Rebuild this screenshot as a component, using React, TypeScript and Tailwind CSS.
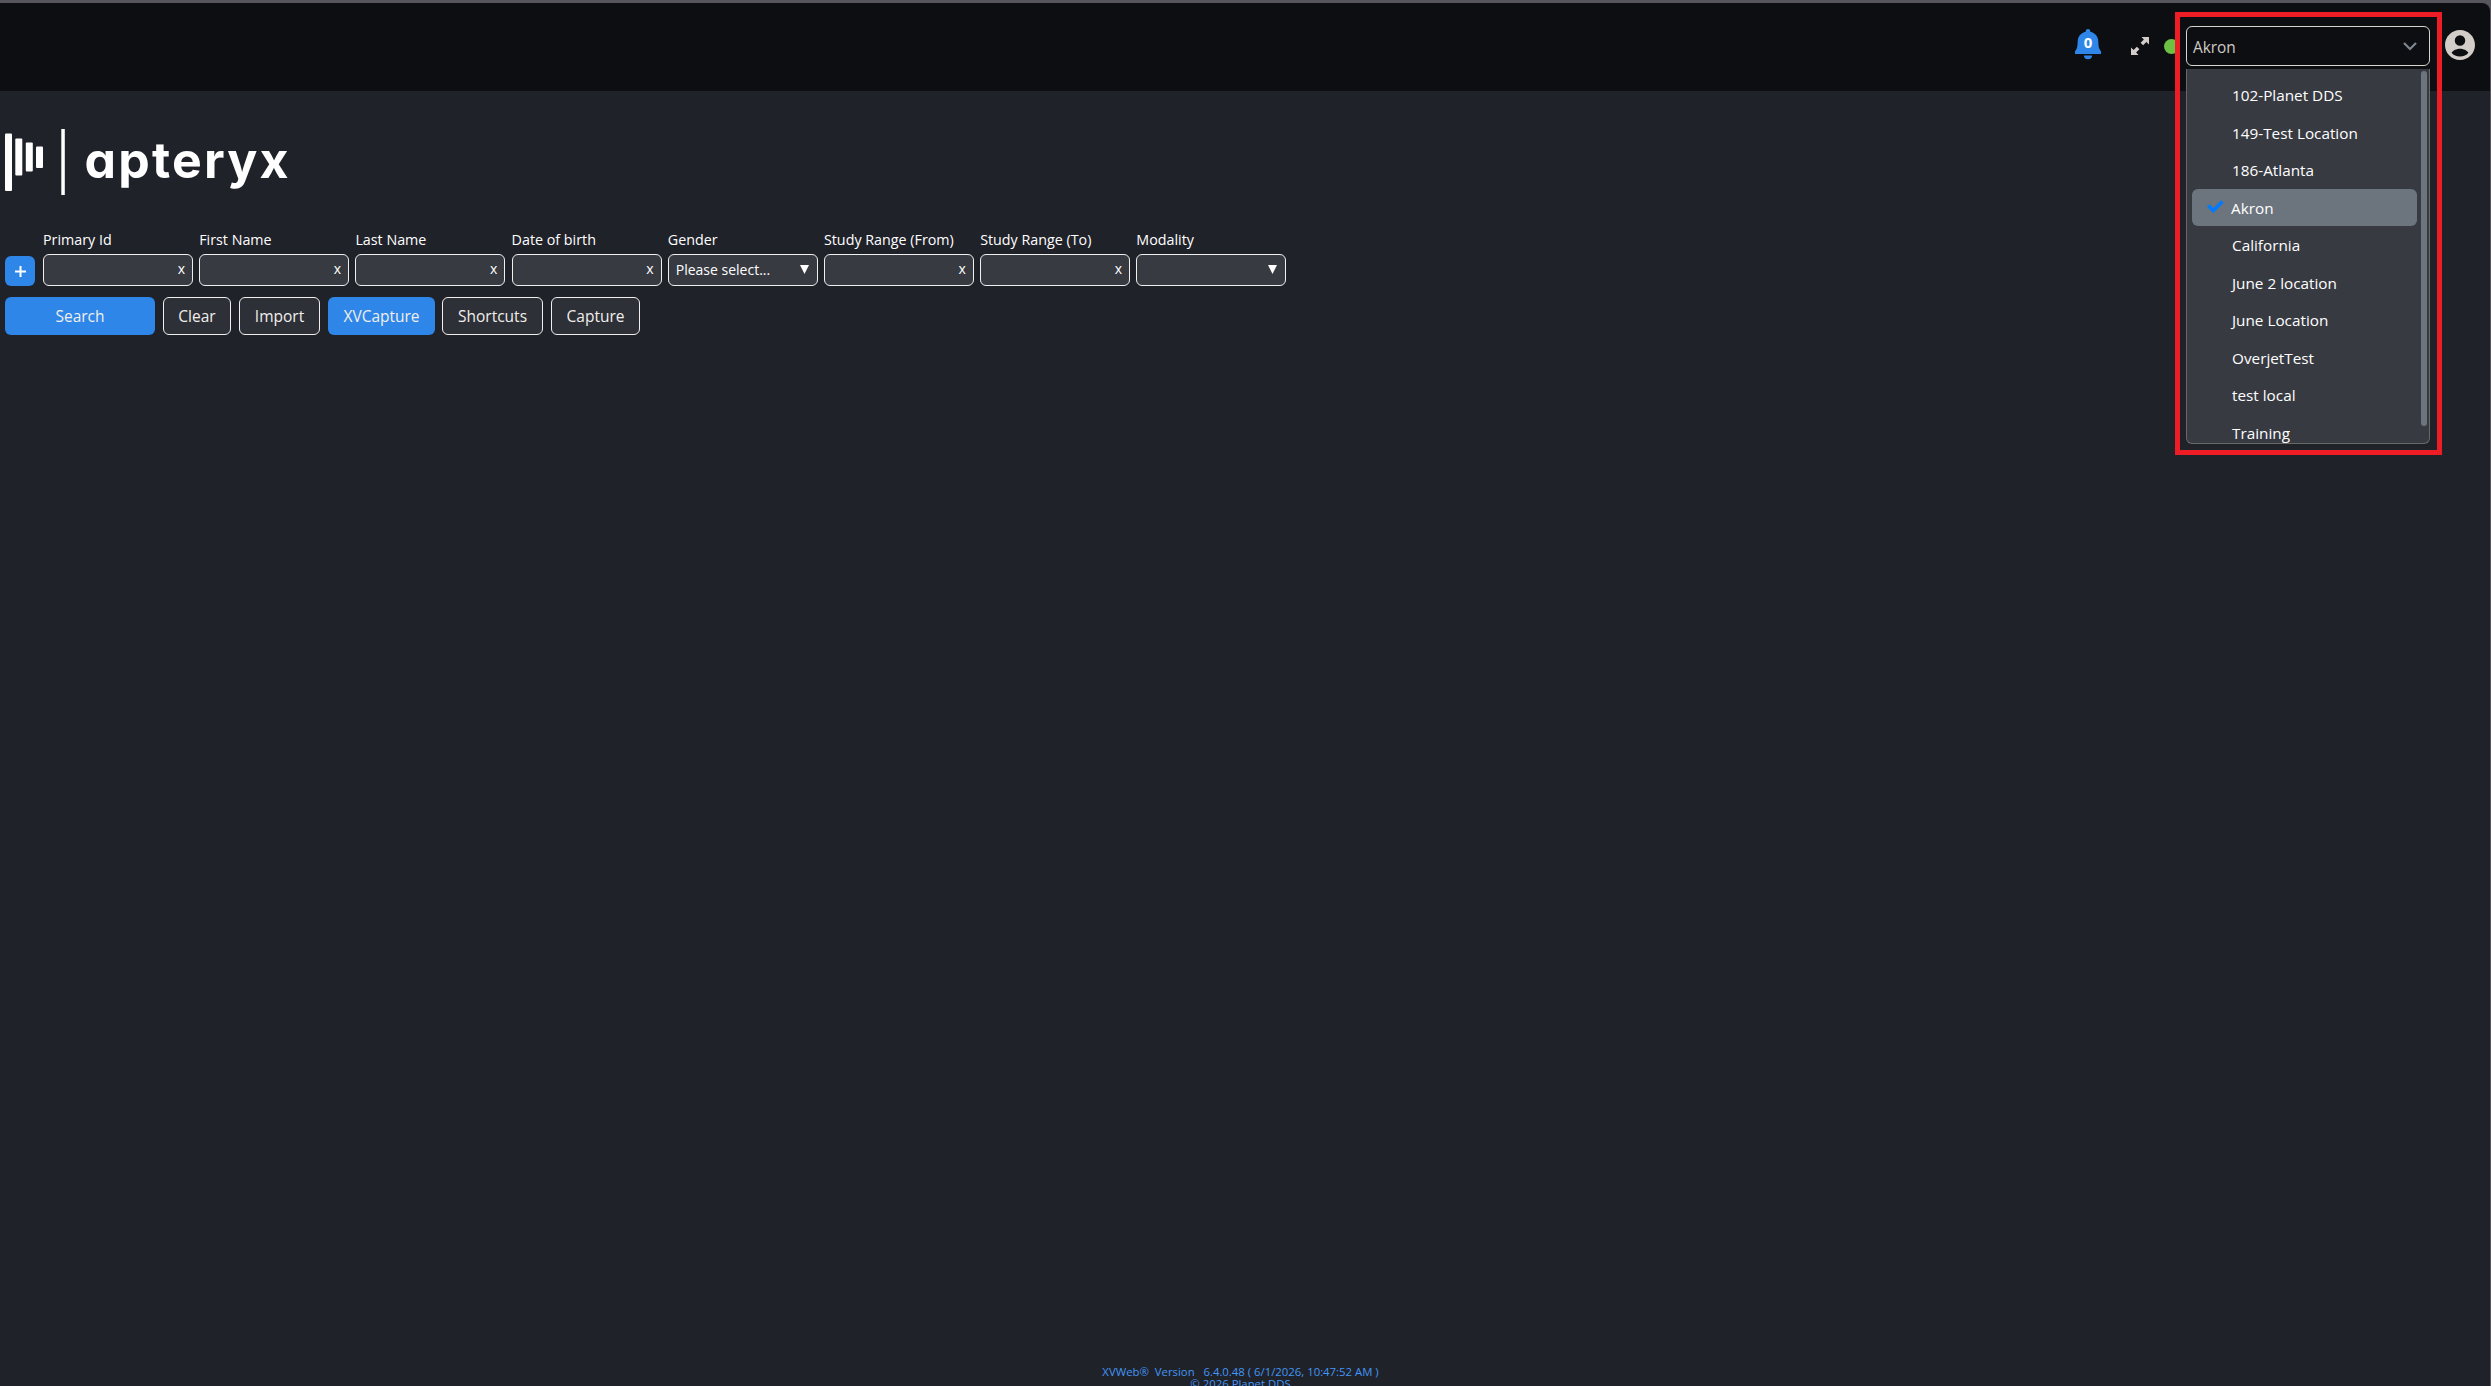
import React from 'react';
import clsx from 'clsx';

const fields = [
  { label: 'Primary Id', type: 'text' },
  { label: 'First Name', type: 'text' },
  { label: 'Last Name', type: 'text' },
  { label: 'Date of birth', type: 'text' },
  { label: 'Gender', type: 'select', value: 'Please select...' },
  { label: 'Study Range (From)', type: 'text' },
  { label: 'Study Range (To)', type: 'text' },
  { label: 'Modality', type: 'select', value: '' },
];

const actions = [
  { label: 'Search', className: 'w-[150px] mr-2', primary: true },
  { label: 'Clear', className: 'w-[68px] mr-2', primary: false },
  { label: 'Import', className: 'w-[81px] mr-2', primary: false },
  { label: 'XVCapture', className: 'w-[107px] mr-[7px]', primary: true },
  { label: 'Shortcuts', className: 'w-[101px] mr-2', primary: false },
  { label: 'Capture', className: 'w-[89px]', primary: false },
];

const locations = [
  '102-Planet DDS',
  '149-Test Location',
  '186-Atlanta',
  'Akron',
  'California',
  'June 2 location',
  'June Location',
  'OverjetTest',
  'test local',
  'Training',
];

const Logo = () => (
  <svg width="290" height="70" viewBox="0 0 290 70" fill="#fff" className="block">
    <rect x="5" y="6.500" width="7" height="57.500" rx="1" />
    <rect x="15.300" y="11.500" width="7" height="37" rx="1" />
    <rect x="25.800" y="15.500" width="7" height="29" rx="1" />
    <rect x="36" y="19.500" width="7" height="21.500" rx="1" />
    <rect x="61.300" y="2" width="3.500" height="66" />
    <text
      x="84.500"
      y="50.500"
      fontSize="50"
      fontWeight="700"
      textLength="204"
      className="font-['Inter',sans-serif] [font-feature-settings:'cv11']"
    >
      apteryx
    </text>
  </svg>
);

const LocationMenu = () => (
  <div className="absolute left-0 top-[43px] w-[244px] h-[375px] pt-[7px] pl-[5px] overflow-hidden bg-[#383a42] border border-t-0 border-[#6a6867] rounded-b-md text-white">
    <ul>
      {locations.map((name) => (
        <li
          key={name}
          className={clsx(
            'h-[37.500px] w-[225px] pt-[2px] flex items-center rounded-md text-[15.300px]',
            name === 'Akron' ? 'bg-[#6c757d] pl-[15px]' : 'pl-10'
          )}
        >
          {name === 'Akron' && (
            <svg width="17" height="13" viewBox="0 0 17 13" fill="none" stroke="#007bff" strokeWidth="3.600" className="mr-[7px] mb-1">
              <path d="M1.300 5.500l5 5L15.500 1.500" />
            </svg>
          )}
          {name}
        </li>
      ))}
    </ul>
    <div className="absolute right-[2px] top-[2px] w-[6px] h-[355px] rounded-full bg-[#6c757d]" />
  </div>
);

const Header = () => (
  <header className="relative z-10 h-[88px] mr-px bg-[#0d0e12] rounded-tr-lg flex justify-end">
    <div className="relative mt-[26px] w-[26px] h-[31px] text-[#2e86e9]">
      <svg width="26" height="31" viewBox="0 0 26 31" fill="currentColor">
        <path d="M13 0a2.300 2.300 0 0 1 2.300 2.300v.5c4.700 1 7.700 4.600 8 9.200.2 5 .3 7.500 2.700 10.200V25H0v-2.800c2.400-2.700 2.500-5.200 2.700-10.200.3-4.600 3.300-8.200 8-9.200v-.5A2.300 2.300 0 0 1 13 0z" />
        <path d="M9 26.500h8a4 3.800 0 0 1-8 0z" />
      </svg>
      <span className="absolute inset-x-0 top-[3px] text-center text-[15px] leading-5 font-bold text-white">0</span>
    </div>
    <svg width="18" height="18" viewBox="0 0 18 18" className="ml-[30px] mt-[34px] text-[#d2cdc8]" fill="currentColor">
      <path d="M10.500 0H18v7.500l-2.600-2.600-3.300 3.300-2.500-2.500 3.300-3.300z" />
      <path d="M7.500 18H0v-7.500l2.600 2.600 3.300-3.300 2.500 2.500-3.300 3.300z" />
    </svg>
    <span className="ml-[15px] mt-[36px] size-[15px] rounded-full bg-[#6cc142]" />
    <div className="relative ml-[7px] mt-[23px] w-[244px] h-10">
      <div className="h-10 px-1.5 flex items-center justify-between border border-[#d8d4cf] rounded-md text-[#cfcac4]">
        <span className="pt-1 text-[15.400px]">Akron</span>
        <svg width="14" height="9" viewBox="0 0 14 9" fill="none" stroke="#7d8790" strokeWidth="2.200" className="mr-[6px]">
          <path d="M1 1l6 6 6-6" />
        </svg>
      </div>
      <LocationMenu />
      <div className="absolute -left-[11px] -top-[14px] w-[267px] h-[443px] border-5 border-[#ee1c25]" />
    </div>
    <svg width="30" height="30" viewBox="2 2 20 20" fill="#d2cdc8" className="ml-[15px] mt-[27px] mr-[15px]">
      <path d="M12 2C6.480 2 2 6.480 2 12s4.480 10 10 10 10-4.480 10-10S17.520 2 12 2zm0 3.500a3.500 3.500 0 1 1 0 7 3.500 3.500 0 0 1 0-7zm0 14.200c-2.500 0-4.300-.8-5.600-2.500.7-1.600 3.600-2.700 5.600-2.700s4.900 1.100 5.600 2.700c-1.300 1.700-3.100 2.500-5.600 2.500z" />
    </svg>
  </header>
);

const SearchForm = () => (
  <div className="mt-[31px] pl-[5px]">
    <div className="flex items-end">
      <button className="size-[30px] mr-2 rounded-md bg-[#2e86e9] flex items-center justify-center">
        <svg width="11" height="11" viewBox="0 0 11 11" stroke="#fff" strokeWidth="2">
          <path d="M5.500 0v11M0 5.500h11" />
        </svg>
      </button>
      <div className="flex gap-[6.200px]">
        {fields.map((field) => (
          <div key={field.label} className="w-[150px]">
            <div className="h-6 mb-[2px] text-[14.300px] leading-6 whitespace-nowrap">{field.label}</div>
            <div className="h-8 px-[7px] flex items-center justify-between bg-[#383a42] border border-[#f0efed] rounded-md text-[14px]">
              <span className="-mt-px">{field.value}</span>
              {field.type === 'select' ? (
                <svg width="9" height="9" viewBox="0 0 9 9" fill="#fff" className="mr-px mb-[2px]">
                  <path d="M0 0h9L4.500 9z" />
                </svg>
              ) : (
                <span className="-mt-[3px]">x</span>
              )}
            </div>
          </div>
        ))}
      </div>
    </div>
    <div className="mt-[11px] flex">
      {actions.map(({ label, className, primary }) => (
        <button
          key={label}
          className={clsx(
            'h-[38px] pt-px flex items-center justify-center rounded-md text-[15.500px] text-[#f0efed]',
            className,
            primary ? 'bg-[#2e86e9]' : 'bg-[#2e3037] border border-[#f0efed]'
          )}
        >
          {label}
        </button>
      ))}
    </div>
  </div>
);

export default function App() {
  return (
    <div className="h-[1386px] overflow-hidden bg-[#56565c] pt-[3px] font-['Open_Sans',sans-serif] text-white">
      <Header />
      <main className="h-[1295px] mr-px pt-9 bg-[#20222a] flex flex-col">
        <Logo />
        <SearchForm />
        <footer className="mt-auto h-[20px] pr-[9px] text-center text-[11.350px] leading-3 text-[#4296f5]">
          <p className="whitespace-pre">XVWeb®  Version   6.4.0.48 ( 6/1/2026, 10:47:52 AM )</p>
          <p>© 2026 Planet DDS</p>
        </footer>
      </main>
    </div>
  );
}
